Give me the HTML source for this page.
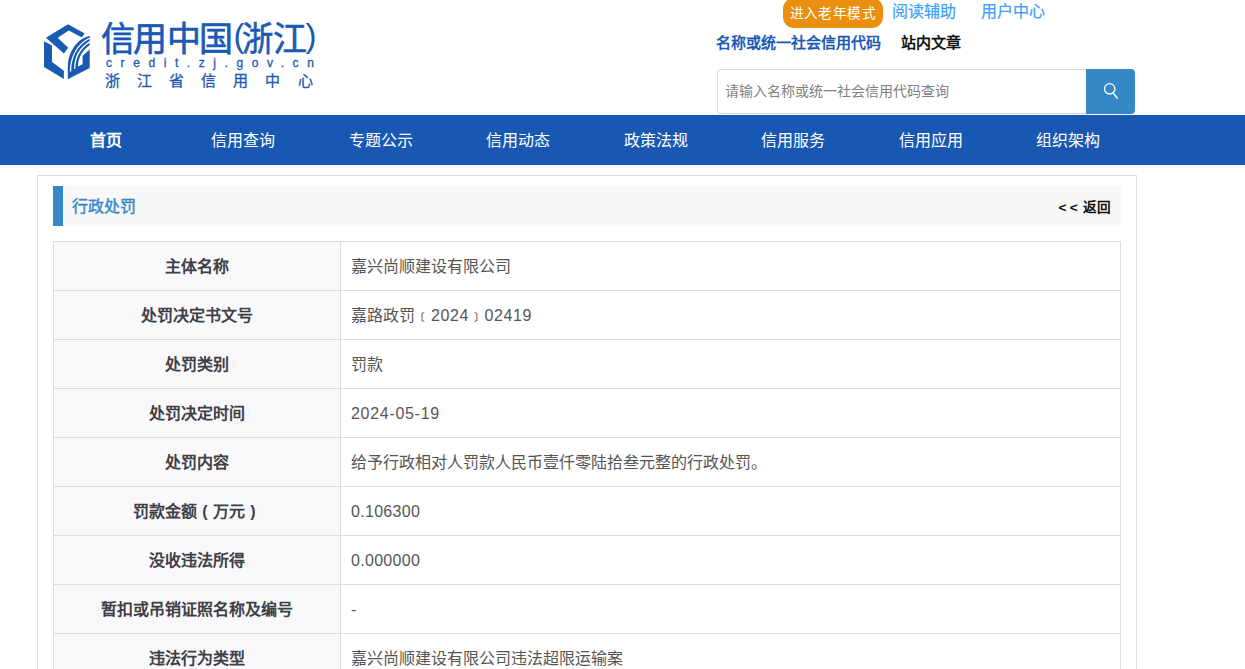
<!DOCTYPE html>
<html lang="zh-CN">
<head>
<meta charset="utf-8">
<title>信用中国(浙江)</title>
<style>
*{box-sizing:border-box;margin:0;padding:0}
html,body{width:1245px;height:669px;overflow:hidden;background:#fff}
body{font-family:"Liberation Sans",sans-serif;color:#333;position:relative;font-size:16px}
.abs{position:absolute;white-space:nowrap}
#logo{left:42px;top:22px;width:50px;height:60px}
#t1{left:100px;top:16px;font-size:34px;line-height:46px;color:#1b5ab3;-webkit-text-stroke:.65px #1b5ab3}
#t1 span{position:absolute;top:0;transform-origin:0 0;display:block}
#t1 .p{font-size:33px;top:-3px;-webkit-text-stroke:0}
#t2{left:106px;top:54px;font-size:12px;line-height:18px;color:#1b5ab3;letter-spacing:8.58px;-webkit-text-stroke:.3px #1b5ab3}
#t3{left:105px;top:70.5px;font-size:15px;line-height:20px;color:#1b5ab3;letter-spacing:17.1px;-webkit-text-stroke:.3px #1b5ab3}
#old{left:783px;top:-2px;width:99.5px;text-indent:0;letter-spacing:.4px;height:30px;background:#ea8f10;border-radius:11px;color:#fff;font-size:13.6px;line-height:31px;text-align:center}
#rd{left:892px;top:0;font-size:16px;line-height:24px;color:#409eff;-webkit-text-stroke:.2px #409eff}
#uc{left:981px;top:0;font-size:16px;line-height:24px;color:#409eff;-webkit-text-stroke:.2px #409eff}
#tab1{left:716px;top:32px;font-size:15px;line-height:22px;color:#1b5ab3;font-weight:bold}
#tab2{left:901px;top:32px;font-size:15px;line-height:22px;color:#111;font-weight:bold}
#sinp{left:717px;top:69px;width:370px;height:45px;border:1px solid #ddd;border-right:none;border-radius:4px 0 0 4px;font-size:14px;line-height:43px;color:#808080;padding-left:7px}
#sbtn{left:1086px;top:69px;width:49px;height:45px;background:#3588c8;border-radius:0 4px 4px 0}
#nav{left:0;top:115px;width:1245px;height:50px;background:#1958b2}
#nav div{position:absolute;top:0;width:137.5px;height:50px;line-height:52px;text-align:center;color:#fff;font-size:16px}
#panel{left:37px;top:175px;width:1100px;height:520px;border:1px solid #ddd;background:#fff}
#tbar{left:53px;top:186px;width:1068px;height:40px;background:#f8f8f9;border-left:10px solid #3588c8}
#ttl{left:72px;top:186px;line-height:42px;font-size:16px;color:#3a87c8;-webkit-text-stroke:.45px #3a87c8}
#back{left:1058.5px;top:187.5px;line-height:40px;font-size:13.6px;font-weight:bold;color:#111}
#tbl{left:53px;top:241px;width:1068px;height:460px;border:1px solid #ddd;border-bottom:none}
.row{position:absolute;left:0;width:1066px;height:49px;border-bottom:1px solid #ddd}
.row .k{position:absolute;left:0;top:0;width:287px;height:48px;background:#f9f9fb;border-right:1px solid #ddd;text-align:center;line-height:50px;font-weight:bold;font-size:16px;color:#3e4046;white-space:nowrap}
.row .v{position:absolute;left:297px;top:0;height:48px;line-height:50px;font-size:16px;color:#555;white-space:nowrap}
.n{letter-spacing:.6px}
.pp{display:inline-block;width:16px;text-align:center}
</style>
</head>
<body>
<svg id="logo" class="abs" viewBox="42 22 50 60">
<g fill="#1b5ab3">
<path d="M45.9 37.7 L68 24.3 L84.8 33.4 L81.6 37.2 L68.7 30.5 L57.7 37.7 L68.2 47.7 L63.9 53.5 Z"/>
<path d="M44 41.2 L52 45.4 L52 62.1 L63.9 70.7 L63.9 78.9 L44 66.9 Z"/>
<path d="M67.8 79.3 L67.8 66 C68 52 77 39 89.7 35.8 L89.7 68.1 Z"/>
</g>
<g fill="none" stroke="#fff" stroke-width="1.3">
<path d="M70.5 71.5 C70.5 56 78 43.5 90 38"/>
<path d="M74.7 68.8 C74.8 56 81 47 90 41.6"/>
</g>
<path fill="#fff" d="M77.9 66.5 C78.2 57 83 49.5 90 45 L90 49.2 L82.6 55.8 L82.6 64.2 Z"/>
</svg>
<div id="t1" class="abs"><span style="left:.8px">信</span><span style="left:32.7px">用</span><span style="left:66.8px">中</span><span style="left:99px">国</span><span class="p" style="left:133.4px">(</span><span style="left:141.5px;transform:scaleX(.92)">浙</span><span style="left:172.6px">江</span><span class="p" style="left:205.5px">)</span></div>
<div id="t2" class="abs">credit.zj.gov.cn</div>
<div id="t3" class="abs">浙江省信用中心</div>

<div id="old" class="abs">进入老年模式</div>
<div id="rd" class="abs">阅读辅助</div>
<div id="uc" class="abs">用户中心</div>
<div id="tab1" class="abs">名称或统一社会信用代码</div>
<div id="tab2" class="abs">站内文章</div>
<div id="sinp" class="abs">请输入名称或统一社会信用代码查询</div>
<div id="sbtn" class="abs"><svg width="49" height="45" viewBox="0 0 49 45"><circle cx="23.7" cy="19.8" r="5.2" fill="none" stroke="#fff" stroke-width="1.3"/><path d="M27.3 24.3 L31.8 29.7" stroke="#fff" stroke-width="1.4" fill="none"/></svg></div>

<div id="nav" class="abs">
<div style="left:37px;font-weight:bold">首页</div>
<div style="left:174.5px">信用查询</div>
<div style="left:312px">专题公示</div>
<div style="left:449.5px">信用动态</div>
<div style="left:587px">政策法规</div>
<div style="left:724.5px">信用服务</div>
<div style="left:862px">信用应用</div>
<div style="left:999.5px">组织架构</div>
</div>

<div id="panel" class="abs"></div>
<div id="tbar" class="abs"></div>
<div id="ttl" class="abs">行政处罚</div>
<div id="back" class="abs"><span style="letter-spacing:3.4px">&lt;&lt;</span><span style="margin-left:2.2px">返回</span></div>

<div id="tbl" class="abs">
<div class="row" style="top:0"><div class="k">主体名称</div><div class="v">嘉兴尚顺建设有限公司</div></div>
<div class="row" style="top:49px"><div class="k">处罚决定书文号</div><div class="v">嘉路政罚﹝<span class="n">202</span>4﹞<span class="n">0241</span>9</div></div>
<div class="row" style="top:98px"><div class="k">处罚类别</div><div class="v">罚款</div></div>
<div class="row" style="top:147px"><div class="k">处罚决定时间</div><div class="v" style="letter-spacing:.7px">2024-05-19</div></div>
<div class="row" style="top:196px"><div class="k">处罚内容</div><div class="v">给予行政相对人罚款人民币壹仟零陆拾叁元整的行政处罚。</div></div>
<div class="row" style="top:245px"><div class="k">罚款金额<span class="pp">(</span>万元<span class="pp">)</span></div><div class="v" style="letter-spacing:.3px">0.106300</div></div>
<div class="row" style="top:294px"><div class="k">没收违法所得</div><div class="v" style="letter-spacing:.3px">0.000000</div></div>
<div class="row" style="top:343px"><div class="k">暂扣或吊销证照名称及编号</div><div class="v">-</div></div>
<div class="row" style="top:392px"><div class="k">违法行为类型</div><div class="v">嘉兴尚顺建设有限公司违法超限运输案</div></div>
</div>
</body>
</html>
